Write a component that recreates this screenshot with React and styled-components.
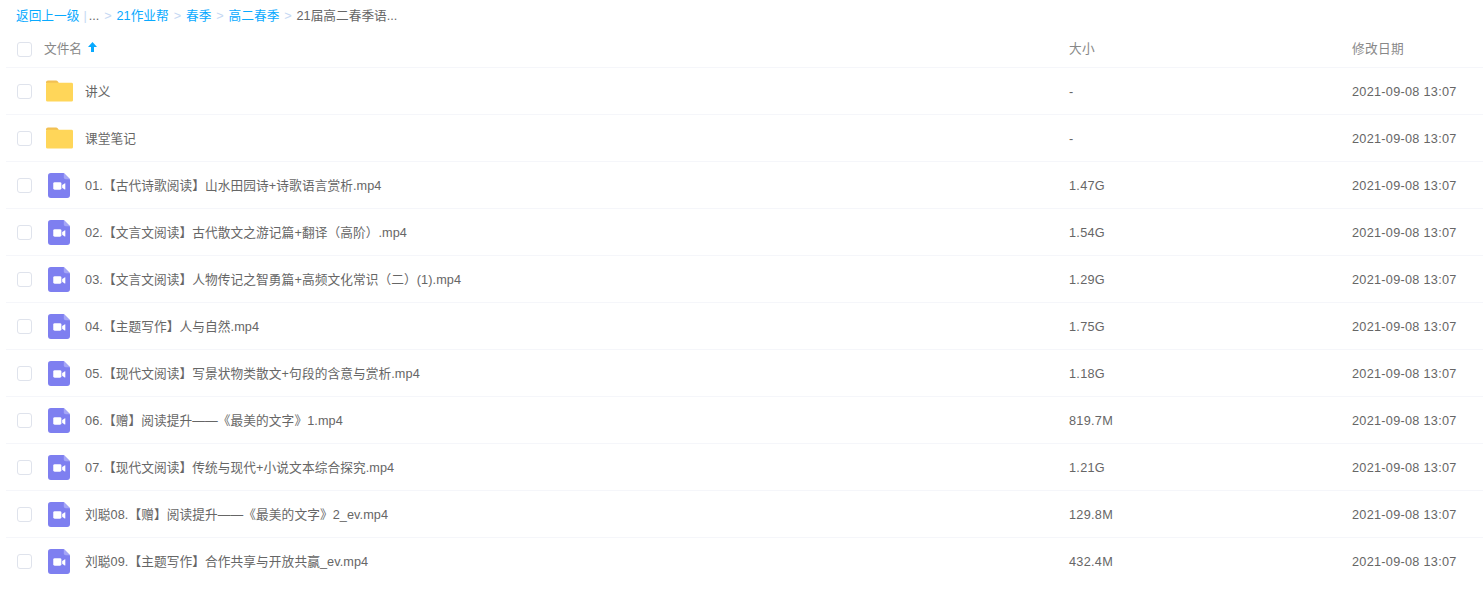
import React from 'react'
import styled, { createGlobalStyle } from 'styled-components'

const GlobalStyle = createGlobalStyle`
    html, body {
        margin: 0;
        padding: 0;
        background: #fff;
    }
    body {
        font-family: "Liberation Sans", "Noto Sans CJK SC", sans-serif;
        font-size: 12.7px;
        color: #666;
    }
`

const files = [
    { name: '讲义', size: '-', folder: true },
    { name: '课堂笔记', size: '-', folder: true },
    { name: '01.【古代诗歌阅读】山水田园诗+诗歌语言赏析.mp4', size: '1.47G' },
    { name: '02.【文言文阅读】古代散文之游记篇+翻译（高阶）.mp4', size: '1.54G' },
    { name: '03.【文言文阅读】人物传记之智勇篇+高频文化常识（二）(1).mp4', size: '1.29G' },
    { name: '04.【主题写作】人与自然.mp4', size: '1.75G' },
    { name: '05.【现代文阅读】写景状物类散文+句段的含意与赏析.mp4', size: '1.18G' },
    { name: '06.【赠】阅读提升——《最美的文字》1.mp4', size: '819.7M' },
    { name: '07.【现代文阅读】传统与现代+小说文本综合探究.mp4', size: '1.21G' },
    { name: '刘聪08.【赠】阅读提升——《最美的文字》2_ev.mp4', size: '129.8M' },
    { name: '刘聪09.【主题写作】合作共享与开放共赢_ev.mp4', size: '432.4M', last: true },
]

const FolderIcon = () => (
    <svg width="27" height="22" viewBox="0 0 28 22">
        <path d="M0 2a2 2 0 0 1 2-2h8.5a2 2 0 0 1 1.6.8L13.5 3H0z" fill="#f2c054" />
        <path d="M0 4a1.5 1.5 0 0 1 1.5-1.5h25A1.5 1.5 0 0 1 28 4v16.5a1.5 1.5 0 0 1-1.5 1.5h-25A1.5 1.5 0 0 1 0 20.500z" fill="#ffd659" />
    </svg>
)

const VideoIcon = () => (
    <svg width="22" height="25" viewBox="0 0 23 26">
        <path d="M3 0h13.500L23 6.500V23a3 3 0 0 1-3 3H3a3 3 0 0 1-3-3V3a3 3 0 0 1 3-3z" fill="#7e7ff0" />
        <path d="M16.500 0L23 6.500h-4.500a2 2 0 0 1-2-2z" fill="#a5a6f6" />
        <rect x="5.500" y="9.500" width="8.500" height="8" rx="1.500" fill="#fff" />
        <path d="M14.800 12.600l2.600-1.800c.4-.2.700 0 .7.400v5.600c0 .4-.3.600-.7.400l-2.600-1.800z" fill="#fff" />
    </svg>
)

const SortArrow = () => (
    <svg width="9" height="10" viewBox="0 0 9 10">
        <path d="M4.500 0L9 5H6v5H3V5H0z" fill="#09aaff" />
    </svg>
)

export default function App() {
    return (
        <Page>
            <GlobalStyle />
            <Breadcrumb>
                <Crumb>返回上一级</Crumb>
                <Bar>|</Bar>
                <span>...</span>
                <Sep>&gt;</Sep>
                <Crumb>21作业帮</Crumb>
                <Sep>&gt;</Sep>
                <Crumb>春季</Crumb>
                <Sep>&gt;</Sep>
                <Crumb>高二春季</Crumb>
                <Sep>&gt;</Sep>
                <span>21届高二春季语...</span>
            </Breadcrumb>
            <HeaderRow>
                <CheckBox />
                <NameHead>文件名 <SortArrow /></NameHead>
                <SizeHead>大小</SizeHead>
                <DateHead>修改日期</DateHead>
            </HeaderRow>
            {files.map((f) => (
                <FileRow key={f.name} $last={f.last}>
                    <CheckBox />
                    <IconCell $video={!f.folder}>{f.folder ? <FolderIcon /> : <VideoIcon />}</IconCell>
                    <NameCell>{f.name}</NameCell>
                    <SizeCell>{f.size}</SizeCell>
                    <DateCell>2021-09-08 13:07</DateCell>
                </FileRow>
            ))}
        </Page>
    )
}

const Page = styled.div`
    width: 1483px;
    height: 591px;
    padding: 0 0 0 6px;
    box-sizing: border-box;
    overflow: hidden;
`

const Breadcrumb = styled.div`
    display: flex;
    align-items: center;
    height: 32px;
    padding-left: 10px;
    column-gap: 4px;
    line-height: 32px;
    color: #666;
`

const Crumb = styled.a`
    color: #09aaff;
`

const Bar = styled.span`
    color: #c4d8f4;
    margin-right: -2px;
`

const Sep = styled.span`
    color: #c5d8f3;
    padding: 0 1px;
    margin-right: -0.2px;
`

const HeaderRow = styled.div`
    display: flex;
    align-items: center;
    height: 34px;
    padding: 0 0 1px 11px;
    border-bottom: 1px solid #f5f6fa;
    color: #888;
`

const FileRow = styled.div`
    display: flex;
    align-items: center;
    height: 46px;
    padding-left: 11px;
    border-bottom: 1px solid ${(p) => (p.$last ? 'transparent' : '#f5f6fa')};
    color: #666;
`

const CheckBox = styled.span`
    flex: none;
    width: 13px;
    height: 13px;
    border: 1px solid #dfe3ec;
    border-radius: 3px;
    background: #fff;
`

const NameHead = styled.div`
    width: 1025px;
    margin-left: 12px;
    padding-bottom: 4px;
    display: flex;
    align-items: center;
    column-gap: 6px;
`

const IconCell = styled.div`
    flex: none;
    width: 27px;
    margin-left: 14px;
    display: flex;
    justify-content: flex-start;
    padding-left: ${(p) => (p.$video ? '2px' : '0')};
    box-sizing: border-box;
`

const NameCell = styled.div`
    width: 984px;
    margin-left: 12px;
    padding-bottom: 2px;
    white-space: nowrap;
    letter-spacing: 0.08px;
`

const SizeCell = styled.div`
    width: 283px;
    flex: none;
    padding-top: 2px;
    letter-spacing: 0.28px;
`

const DateCell = styled.div`
    flex: none;
    padding-top: 2px;
    white-space: nowrap;
    letter-spacing: 0.28px;
`

const SizeHead = styled(SizeCell)`
    padding: 0 0 4px;
`

const DateHead = styled(DateCell)`
    padding: 0 0 4px;
`
